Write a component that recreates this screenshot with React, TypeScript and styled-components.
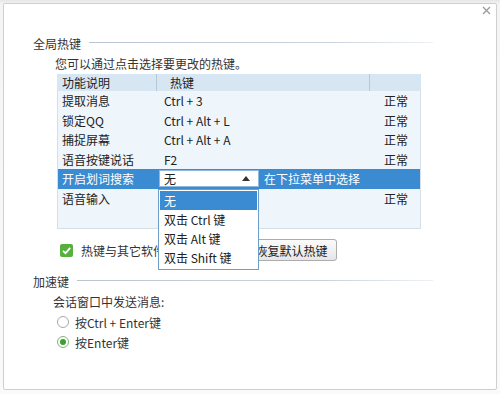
import { createGlobalStyle } from "styled-components";
import styled from "styled-components";

const GlobalStyle = createGlobalStyle`
  html, body {
    margin: 0;
    padding: 0;
    background: #eeeeee;
  }
  body {
    font-family: "Noto Sans CJK SC", "Liberation Sans", sans-serif;
    font-size: 12px;
    color: #222;
  }
`;

const Page = styled.div`
  width: 500px;
  height: 394px;
  padding: 3px 3px 4px 3px;
  box-sizing: border-box;
  background: linear-gradient(#e6e6e6 0, #f4f4f4 4px, #fafafa 100%);
`;

const Window = styled.div`
  position: relative;
  height: 100%;
  box-sizing: border-box;
  background: #fff;
  border: 1px solid #cfcfcf;
  border-radius: 2px;
  display: flex;
  flex-direction: column;
`;

const TitleBar = styled.div`
  display: flex;
  justify-content: flex-end;
  height: 14px;
  padding: 2px 5px 0 0;
`;

const Close = styled.svg`
  width: 9px;
  height: 9px;
`;

const Section = styled.div`
  display: flex;
  flex-direction: column;
  padding: 0 0 0 29px;
  margin-top: ${({ $top }: { $top: number }) => $top}px;
`;

const SectionHead = styled.div`
  display: flex;
  align-items: center;
  gap: 8px;
  height: 16px;
  line-height: 16px;
  color: #333;
  width: 400px;
`;

const Rule = styled.div`
  flex: 1;
  height: 1px;
  margin-top: -3px;
  background: linear-gradient(90deg, #b9c6d2 0%, #c9d3dc 70%, #eef1f4 100%);
`;

const Hint = styled.div`
  margin: 4px 0 0 22px;
  line-height: 16px;
  color: #333;
`;

const Table = styled.div`
  position: relative;
  margin: 2px 0 0 24px;
  width: 364px;
  height: 155px;
  box-sizing: border-box;
  background: #eef5fb;
  border: 1px solid #d5dfe8;
  border-top: none;
`;

const Row = styled.div<{ $head?: boolean; $sel?: boolean }>`
  display: grid;
  grid-template-columns: 99px 213px 1fr;
  align-items: center;
  height: ${({ $head }) => ($head ? "17px" : "19.5px")};
  background: ${({ $head, $sel }) => ($head ? "#d6e6f3" : $sel ? "#3a8bd2" : "transparent")};
  color: ${({ $sel }) => ($sel ? "#fff" : "#222")};
  margin: ${({ $head }) => ($head ? "0 -1px 0 -1px" : "0")};
`;

const Cell = styled.div<{ $pad: number; $sep?: boolean }>`
  padding-left: ${({ $pad }) => $pad}px;
  height: 100%;
  display: flex;
  align-items: center;
  white-space: nowrap;
  border-left: ${({ $sep }) => ($sep ? "1px solid #b7c9d9" : "none")};
  box-sizing: border-box;
`;

const HeadCell = styled(Cell)`
  border-left-color: ${({ $sep }) => ($sep ? "#b7c9d9" : "transparent")};
  background-clip: padding-box;
`;

const EditCell = styled.div`
  grid-column: 2 / 4;
  display: flex;
  align-items: center;
  gap: 5px;
  padding-left: 2px;
  height: 100%;
`;

const Combo = styled.div`
  width: 100px;
  height: 17px;
  box-sizing: border-box;
  background: #fff;
  border: 1px solid #8cb8e2;
  color: #222;
  display: flex;
  align-items: center;
  justify-content: space-between;
  padding: 0 8px 0 4px;
`;

const UpArrow = styled.span`
  width: 0;
  height: 0;
  border-left: 4px solid transparent;
  border-right: 4px solid transparent;
  border-bottom: 5px solid #333;
`;

const DropList = styled.div`
  position: absolute;
  left: 100px;
  top: 115px;
  width: 101px;
  box-sizing: border-box;
  background: #fff;
  border: 1px solid #6f9dc9;
  padding: 1px 0 2px 0;
  z-index: 2;
`;

const Option = styled.div<{ $on?: boolean }>`
  height: 19px;
  line-height: 19px;
  padding-left: 4px;
  margin: 0 1px;
  background: ${({ $on }) => ($on ? "#3a8bd2" : "transparent")};
  color: ${({ $on }) => ($on ? "#fff" : "#222")};
  white-space: nowrap;
`;

const CheckRow = styled.div`
  display: flex;
  align-items: center;
  margin: 10px 0 0 27px;
  height: 22px;
`;

const CheckBox = styled.svg`
  width: 13px;
  height: 13px;
  margin-right: 8px;
`;

const Label = styled.span`
  color: #333;
  white-space: nowrap;
`;

const Button = styled.button`
  margin-left: 21px;
  height: 22px;
  width: 91px;
  font: inherit;
  color: #222;
  border: 1px solid #acacac;
  border-radius: 3px;
  background: linear-gradient(#fbfbfb, #e6e6e6);
  padding: 0;
`;

const Hint2 = styled(Hint)`
  margin: 4px 0 0 20px;
`;

const RadioRow = styled.div`
  display: flex;
  align-items: center;
  gap: 6px;
  margin: 4px 0 0 24px;
  height: 16px;
  color: #333;
`;

const Radio = styled.span<{ $on?: boolean }>`
  width: 12px;
  height: 12px;
  box-sizing: border-box;
  border-radius: 50%;
  border: 1px solid ${({ $on }) => ($on ? "#7fb47a" : "#a8a8a8")};
  background: #fff;
  display: flex;
  align-items: center;
  justify-content: center;
  &::after {
    content: "";
    width: 6px;
    height: 6px;
    border-radius: 50%;
    background: ${({ $on }) => ($on ? "#3d9f2f" : "transparent")};
  }
`;

const hotkeys = [
  { name: "提取消息", key: "Ctrl + 3", state: "正常" },
  { name: "锁定QQ", key: "Ctrl + Alt + L", state: "正常" },
  { name: "捕捉屏幕", key: "Ctrl + Alt + A", state: "正常" },
  { name: "语音按键说话", key: "F2", state: "正常" },
];

export default function App() {
  return (
    <>
      <GlobalStyle />
      <Page>
        <Window>
          <TitleBar>
            <Close viewBox="0 0 9 9">
              <path d="M1 1L8 8M8 1L1 8" stroke="#9a9a9a" strokeWidth="1.3" />
            </Close>
          </TitleBar>

          <Section $top={16}>
            <SectionHead>
              全局热键
              <Rule />
            </SectionHead>
            <Hint>您可以通过点击选择要更改的热键。</Hint>
            <Table>
              <Row $head>
                <HeadCell $pad={5}>功能说明</HeadCell>
                <HeadCell $pad={13} $sep>
                  热键
                </HeadCell>
                <HeadCell $pad={0} $sep />
              </Row>
              {hotkeys.map((h) => (
                <Row key={h.name}>
                  <Cell $pad={4}>{h.name}</Cell>
                  <Cell $pad={7}>{h.key}</Cell>
                  <Cell $pad={14}>{h.state}</Cell>
                </Row>
              ))}
              <Row $sel>
                <Cell $pad={4}>开启划词搜索</Cell>
                <EditCell>
                  <Combo>
                    无
                    <UpArrow />
                  </Combo>
                  在下拉菜单中选择
                </EditCell>
              </Row>
              <Row>
                <Cell $pad={4}>语音输入</Cell>
                <Cell $pad={7} />
                <Cell $pad={14}>正常</Cell>
              </Row>
              <DropList>
                <Option $on>无</Option>
                <Option>双击 Ctrl 键</Option>
                <Option>双击 Alt 键</Option>
                <Option>双击 Shift 键</Option>
              </DropList>
            </Table>
            <CheckRow>
              <CheckBox viewBox="0 0 13 13">
                <rect x="0" y="0" width="13" height="13" rx="2" fill="#55b03e" />
                <path d="M3 6.8L5.5 9.2L10.2 3.8" stroke="#fff" strokeWidth="1.8" fill="none" />
              </CheckBox>
              <Label>热键与其它软件冲突时提示</Label>
              <Button>恢复默认热键</Button>
            </CheckRow>
          </Section>

          <Section $top={13}>
            <SectionHead>
              加速键
              <Rule />
            </SectionHead>
            <Hint2>会话窗口中发送消息:</Hint2>
            <RadioRow>
              <Radio />
              按Ctrl + Enter键
            </RadioRow>
            <RadioRow>
              <Radio $on />
              按Enter键
            </RadioRow>
          </Section>
        </Window>
      </Page>
    </>
  );
}
